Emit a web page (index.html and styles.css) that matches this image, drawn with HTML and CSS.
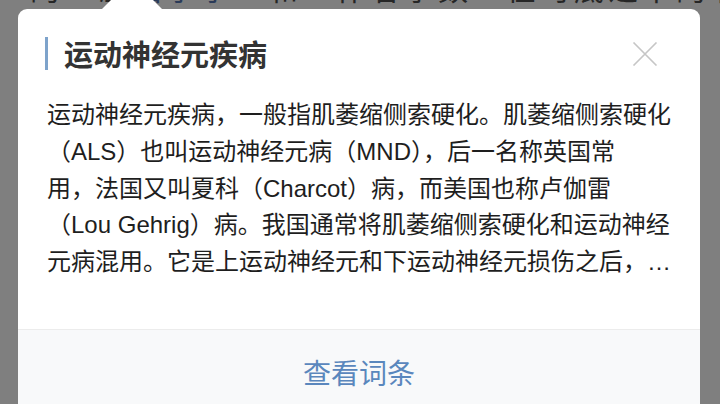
FILE: index.html
```html
<!DOCTYPE html>
<html lang="zh-CN">
<head>
    <meta charset="UTF-8">
    <meta name="viewport" content="width=device-width, initial-scale=1.0">
    <title>运动神经元疾病</title>
    <link rel="stylesheet" href="styles.css">
</head>
<body>
    <!-- Article line behind the dimmed overlay -->
    <div class="article-line">
        <p>的“溢<span class="link">出字字</span>”和“作者字数”在时底之下的收字</p>
    </div>

    <!-- Term popup -->
    <div class="term-popup">
        <span class="popup-arrow"></span>

        <div class="popup-head">
            <h2 class="popup-title">运动神经元疾病</h2>
            <button class="close-btn" aria-label="关闭">
                <svg width="26" height="24" viewBox="0 0 26 24">
                    <path d="M1.5 0.5 L24.5 23.5 M24.5 0.5 L1.5 23.5" stroke="#c6c6c6" stroke-width="1.6" fill="none"/>
                </svg>
            </button>
        </div>

        <p class="popup-text">运动神经元疾病，一般指肌萎缩侧索硬化。肌萎缩侧索硬化<br>（ALS）也叫运动神经元病（MND），后一名称英国常<br>用，法国又叫夏科（Charcot）病，而美国也称卢伽雷<br>（Lou Gehrig）病。我国通常将肌萎缩侧索硬化和运动神经<br>元病混用。它是上运动神经元和下运动神经元损伤之后，…</p>

        <div class="popup-foot">
            <a class="more-link" href="#">查看词条</a>
        </div>
    </div>
</body>
</html>
```

FILE: styles.css
```css
body {
    margin: 0;
    width: 720px;
    height: 404px;
    overflow: hidden;
    background-color: #7f7f7f;
    font-family: "Noto Sans CJK SC", "Noto Sans", sans-serif;
}
.article-line {
    height: 9px;
    overflow: hidden;
}
.article-line p {
    margin: -33px 0 0 30px;
    font-size: 30px;
    line-height: 40px;
    letter-spacing: 4px;
    white-space: nowrap;
    color: #262626;
}
.article-line .link {
    color: #2a3a58;
}
.term-popup {
    position: relative;
    margin: 0 20px 0 18px;
    background-color: #ffffff;
    border-radius: 9px 9px 0 0;
    height: 420px;
}
.popup-arrow {
    position: absolute;
    top: -30px;
    left: 82px;
    width: 0;
    height: 0;
    border-left: 32px solid transparent;
    border-right: 32px solid transparent;
    border-bottom: 32px solid #ffffff;
}
.popup-head {
    display: flex;
    align-items: center;
    justify-content: space-between;
    padding: 28px 42px 0 27px;
}
.popup-title {
    margin: 0;
    padding-left: 16px;
    border-left: 3px solid #7ea3cb;
    font-size: 29px;
    line-height: 33px;
    font-weight: 600;
    color: #333333;
}
.close-btn {
    border: none;
    background: none;
    padding: 0;
    width: 26px;
    height: 24px;
    cursor: pointer;
}
.close-btn svg {
    display: block;
}
.popup-text {
    margin: 27px 0 0 0;
    padding: 0 20px 48px 29px;
    font-family: "Liberation Sans", "Noto Sans CJK SC", sans-serif;
    font-size: 24px;
    line-height: 36.75px;
    color: #1e1e1e;
    white-space: nowrap;
}
.popup-foot {
    border-top: 1px solid #ececec;
    background-color: #f8f9fa;
    padding-top: 22px;
    height: 100px;
    text-align: center;
}
.more-link {
    font-size: 28px;
    line-height: 40px;
    color: #5a87bd;
    text-decoration: none;
}
```
